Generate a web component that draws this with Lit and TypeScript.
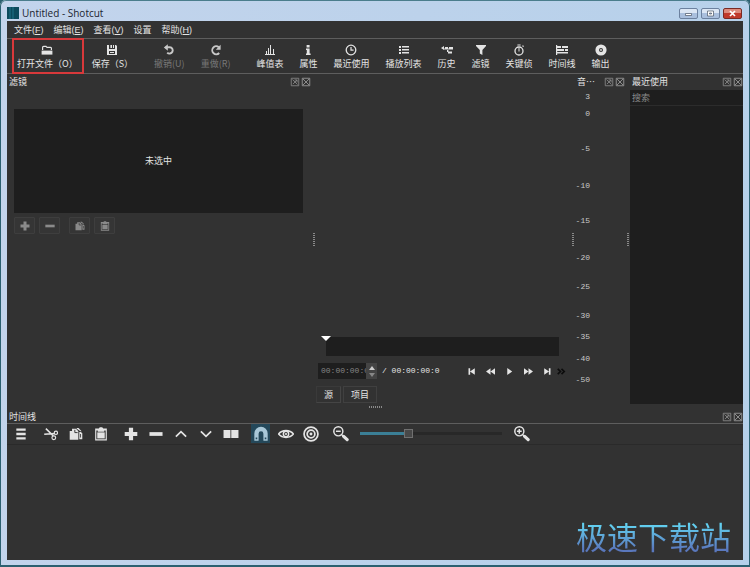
import { LitElement, html, css, svg, nothing } from "lit";
import { customElement, property } from "lit/decorators.js";
import { classMap } from "lit/directives/class-map.js";
import { styleMap } from "lit/directives/style-map.js";

const icons: Record<string, unknown> = {
  open: svg`<path d="M1.6 6V3.4a1 1 0 0 1 1-1H5l1 1h3.6a.8.8 0 0 1 .8.8V6" fill="none" stroke="currentColor" stroke-width="1.2"/><path d="M.6 6.6h10.8v4H.6z"/>`,
  save: svg`<path d="M1 1h2v4h6V1h1l1 1v9H1zM4.4 1H6v3H4.4zM3 7v3h6V7z" fill-rule="evenodd"/><path d="M4 8h4v1H4zM7 1h1v3H7z"/>`,
  undo: svg`<path d="M2.6 3.2h4.2a3.2 3.2 0 1 1-2.6 5.4" fill="none" stroke="currentColor" stroke-width="1.9"/><path d="M.8 3.6 4.8.2v6.6z"/>`,
  redo: svg`<path d="M8.8 3.2A4 4 0 1 0 9.2 9" fill="none" stroke="currentColor" stroke-width="1.9"/><path d="M10.6.8v5H5.8z"/>`,
  peak: svg`<path d="M1 10h10v1H1zM2 7h1v3H2zM4 4h1v6H4zM6 1h1v9H6zM9 5h1v5H9z"/>`,
  info: svg`<path d="M4.6 1h3v2.4h-3zM4 4.6h3.6V9.6h1V11H4V9.6h.8V6H4z"/>`,
  clock: svg`<circle cx="6" cy="6" r="4.8" fill="none" stroke="currentColor" stroke-width="1.3"/><path d="M6 3v3.2h2.6" fill="none" stroke="currentColor" stroke-width="1.2"/>`,
  list: svg`<path d="M1 2h2v2H1zM1 5h2v2H1zM1 8h2v2H1zM4 2h7v1.6H4zM4 5h7v1.6H4zM4 8h7v1.6H4z"/>`,
  history: svg`<path d="M0 4l3-2v4zM4 3h3v2H4zM8 3h4v2.6H8zM2 4.4h6v1H2zM6 6h1.4v2H6zM7 7.4h4v2H7z"/>`,
  filter: svg`<path d="M1 1h10v1L7.4 6v5L4.8 9.4V6L1 2z"/>`,
  stopwatch: svg`<circle cx="6" cy="7" r="4" fill="none" stroke="currentColor" stroke-width="1.3"/><path d="M4.4.4h3.2v1.2H4.4zM5.5 4h1v3.4h-1zM9 2l1-.8 1 1-.9.9z"/>`,
  timeline: svg`<path d="M0 1h1.2v10H0zM1 2h4v2H1zM6 2h6v2H6zM1 5h7v2H1zM9 5h3v2H9zM1 8h11v1.6H1z"/>`,
  disc: svg`<path d="M6 .4a5.6 5.6 0 1 0 0 11.2A5.6 5.6 0 0 0 6 .4zM6 4a2 2 0 1 1 0 4 2 2 0 0 1 0-4z" fill-rule="evenodd"/><circle cx="6" cy="6" r=".9"/>`,
  float: svg`<path d="M1.5 1.5h9v9h-9zM3 3l6 6M5.5 3.5H8.5V6.5M8.5 3.5 3.5 8.5" fill="none" stroke="currentColor" stroke-width="1"/>`,
  close: svg`<path d="M1.5 1.5h9v9h-9zM2 2l8 8M10 2l-8 8" fill="none" stroke="currentColor" stroke-width="1.2"/>`,
  add: svg`<path d="M4.2.6h3.6v3.6h3.6v3.6H7.8v3.6H4.2V7.8H.6V4.2h3.6z"/>`,
  remove: svg`<path d="M.4 4.4h11.2v3.2H.4z"/>`,
  copy: svg`<path d="M.6 3.4h2V1.6H6l2 2V11H.6z"/><path d="M5 2.4v2.4h2.4" fill="none" stroke="#323232" stroke-width=".8"/><path d="M6.6.8h1.6L10.8 3.6h-1L6.6 1.4zM8.8 4.2h1.4l1.2 1.2v5H8.8zM9.6 6v3h.7V6z" fill-rule="evenodd"/>`,
  paste: svg`<path d="M1 1.2h3L5 .2h2l1 1h3v10.4H1zM2 3v7.6h8V3H8.8v1H3.2V3z" fill-rule="evenodd"/><path d="M2.8 4.6h6.4v5.2H2.8z"/>`,
  menu: svg`<path d="M2 1.2h8v2H2zM2 5h8v2H2zM2 8.8h8v2H2z"/>`,
  cut: svg`<path d="M1.6 1.4 8 7.6M.2 6.2 9.4 5.6" fill="none" stroke="currentColor" stroke-width="1.3"/><circle cx="10.2" cy="5" r="1.4" fill="none" stroke="currentColor"/><circle cx="8.4" cy="9.2" r="1.6" fill="none" stroke="currentColor"/>`,
  up: svg`<path d="M1.6 8.2 6 4l4.4 4.2" fill="none" stroke="currentColor" stroke-width="1.5"/>`,
  down: svg`<path d="M1.6 3.8 6 8l4.4-4.2" fill="none" stroke="currentColor" stroke-width="1.5"/>`,
  split: svg`<path d="M.4 3h5.2v6H.4zM6.2 3h5.4v6H6.2z"/>`,
  magnet: svg`<path d="M1 11V5.6a5 5 0 0 1 10 0V11H7.8V5.8a1.8 1.8 0 0 0-3.6 0V11zM2 8.6v1.4h1.2V8.6zM8.8 8.6v1.4H10V8.6z" fill-rule="evenodd"/>`,
  eye: svg`<path d="M.4 6C3 2.6 9 2.6 11.6 6 9 9.4 3 9.4.4 6z" fill="none" stroke="currentColor" stroke-width="1.2"/><circle cx="6" cy="6" r="2" fill="none" stroke="currentColor" stroke-width="1.1"/><circle cx="6" cy="6" r=".8"/>`,
  target: svg`<g fill="none" stroke="currentColor" stroke-width="1.3"><circle cx="6" cy="6" r="5.2"/><circle cx="6" cy="6" r="2.9"/></g><circle cx="6" cy="6" r="1.1"/>`,
  zoomout: svg`<circle cx="4" cy="4" r="3.4" fill="none" stroke="currentColor" stroke-width="1.1"/><path d="M2.2 3.4h3.6v1.1H2.2z"/><path d="M6.4 6.4l1.4 1.4" stroke="currentColor"/><path d="M8 7.8l2.6 2.4" stroke="currentColor" stroke-width="2.4" stroke-linecap="round"/>`,
  zoomin: svg`<circle cx="4" cy="4" r="3.4" fill="none" stroke="currentColor" stroke-width="1.1"/><path d="M2.2 3.4h3.6v1.1H2.2zM3.4 2.2h1.1v3.6H3.4z"/><path d="M6.4 6.4l1.4 1.4" stroke="currentColor"/><path d="M8 7.8l2.6 2.4" stroke="currentColor" stroke-width="2.4" stroke-linecap="round"/>`,
  first: svg`<path d="M2 1.6h2.2v8.8H2zM10.4 1.6v8.8L4 6z"/>`,
  rewind: svg`<path d="M6 1.6v8.8L0 6zM12 1.6v8.8L6 6z"/>`,
  play: svg`<path d="M3 1.2 9.6 6 3 10.8z"/>`,
  forward: svg`<path d="M0 1.6 6 6l-6 4.4zM6 1.6 12 6l-6 4.4z"/>`,
  last: svg`<path d="M1.6 1.6 8 6l-6.4 4.4zM7.8 1.6H10v8.8H7.8z"/>`,
  more: svg`<path d="M1 2.6 4.6 6 1 9.4M6 2.6 9.6 6 6 9.4" fill="none" stroke="currentColor" stroke-width="2.2"/>`,
};

@customElement("app-icon")
class AppIcon extends LitElement {
  @property() name = "";
  static styles = css`
    :host { display: block; width: 12px; height: 12px; flex: none; }
    svg { display: block; width: 100%; height: 100%; fill: currentColor; }
  `;
  render() {
    return html`<svg viewBox="0 0 12 12" aria-hidden="true">${icons[this.name]}</svg>`;
  }
}

@customElement("dock-title")
class DockTitle extends LitElement {
  @property() label = "";
  static styles = css`
    :host { display: flex; align-items: center; height: 16px; flex: none; padding: 0 0 0 2px; gap: 1px; }
    h2 { flex: 1; min-width: 0; margin: 0; font: inherit; overflow: hidden; white-space: nowrap; }
    button { border: 0; padding: 0; background: none; color: #8c8c8c; width: 10px; height: 10px; }
    app-icon { width: 10px; height: 10px; }
  `;
  render() {
    return html`<h2>${this.label}</h2>
      <button aria-label="浮动"><app-icon name="float"></app-icon></button>
      <button aria-label="关闭"><app-icon name="close"></app-icon></button>`;
  }
}

type Tool = { icon: string; label: string; disabled?: boolean; marked?: boolean };

const menus = [["文件", "F"], ["编辑", "E"], ["查看", "V"], ["设置", ""], ["帮助", "H"]];

const toolGroups: Tool[][] = [
  [
    { icon: "open", label: "打开文件（O）", marked: true },
    { icon: "save", label: "保存（S）" },
  ],
  [
    { icon: "undo", label: "撤销(U)", disabled: true },
    { icon: "redo", label: "重做(R)", disabled: true },
  ],
  [
    { icon: "peak", label: "峰值表" },
    { icon: "info", label: "属性" },
    { icon: "clock", label: "最近使用" },
    { icon: "list", label: "播放列表" },
    { icon: "history", label: "历史" },
    { icon: "filter", label: "滤镜" },
    { icon: "stopwatch", label: "关键侦" },
    { icon: "timeline", label: "时间线" },
    { icon: "disc", label: "输出" },
  ],
];

/* level in dB and the share of the scale down to the next level */
const levels: [string, number][] = [
  ["3", 17], ["0", 35], ["-5", 37], ["-10", 35], ["-15", 37], ["-20", 29],
  ["-25", 29], ["-30", 21], ["-35", 22], ["-40", 21], ["-50", 30],
];

const filterButtons = [["add", "remove"], ["copy", "paste"]];
const transport = ["first", "rewind", "play", "forward", "last"];
const timelineGroups = [
  ["menu"],
  ["cut", "copy", "paste"],
  ["add", "remove", "up", "down", "split"],
  ["magnet", "eye", "target"],
  ["zoomout"],
];

@customElement("app-root")
class AppRoot extends LitElement {
  @property({ type: Number }) zoom = 33;

  static styles = css`
    :host {
      display: block;
      font: 9px/12px "Noto Sans CJK SC", "Liberation Sans", sans-serif;
      color: #e4e4e4;
    }
    * { box-sizing: border-box; }
    button, input { font: inherit; color: inherit; margin: 0; }
    button { border: 0; padding: 0; background: none; }

    .window {
      position: relative;
      display: flex;
      flex-direction: column;
      min-height: 100vh;
      padding: 0 6px 5px;
      border: 1px solid #2b6070;
      border-top-color: #4a7d8c;
      border-bottom-width: 2px;
      border-radius: 6px 6px 0 0;
      background: linear-gradient(100deg, #c3d4ec, #b5d0ea);
      box-shadow: 0 0 0 6px #2b6070;
    }
    .titlebar { display: flex; align-items: center; gap: 3px; height: 20px; padding: 4px 1px 0 0; color: #1c2430; flex: none; }
    .logo { width: 12px; height: 12px; flex: none; }
    .titlebar h1 { flex: 1; margin: 0; font: 10px/14px "Open Sans", sans-serif; }
    .caption { display: flex; gap: 3px; }
    .caption button {
      display: grid;
      place-items: center;
      width: 19px;
      height: 11px;
      border: 1px solid #6c819f;
      border-radius: 2px;
      background: linear-gradient(#dbe6f4 50%, #a9bfdd 50%);
    }
    .caption .quit { border-color: #7a2a24; background: linear-gradient(#dd8a7c 50%, #c0392b 50%); }
    .caption svg { width: 9px; height: 7px; display: block; }

    .client { flex: 1; display: flex; flex-direction: column; background: #323232; }
    .menubar { display: flex; height: 18px; padding-left: 2px; border-bottom: 1px solid #5e5e5e; flex: none; }
    .menubar button { padding: 0 5px; font-family: "Liberation Sans", "Noto Sans CJK SC", sans-serif; }
    .toolbar { display: flex; height: 35px; padding-left: 2px; border-bottom: 1px solid #5e5e5e; flex: none; }
    .group { display: flex; }
    .group + .group { margin-left: 5px; }
    .tool { position: relative; display: flex; flex-direction: column; align-items: center; gap: 2px; padding: 5px 8px 0; white-space: nowrap; }
    .tool:disabled { color: #777; }
    .tool:disabled app-icon { color: #c8c8c8; }
    .tool.marked { padding-right: 6px; }
    .toolbar .group:last-child { margin-left: 10px; }
    .marked::after { content: ""; position: absolute; inset: -1px 0 -1px 3px; border: 2px solid #d8393b; }

    .docks {
      flex: 330 1 0;
      display: grid;
      grid-template-columns: 304fr 5px 254fr 5px 50px 5px 113fr;
    }
    .dock { display: flex; flex-direction: column; min-width: 0; }
    .grip { display: grid; place-items: center; }
    .grip::before { content: ""; width: 2px; height: 13px; background: repeating-linear-gradient(#8a8a8a 0 1px, transparent 1px 2px); }
    .grip.flat { height: 6px; flex: none; }
    .grip.flat::before { width: 13px; height: 2px; background: repeating-linear-gradient(90deg, #8a8a8a 0 1px, transparent 1px 2px); }

    .empty { display: grid; place-items: center; height: 104px; margin: 19px 8px 4px 7px; background: #1e1e1e; }
    .filter-actions { display: flex; gap: 9px; padding-left: 7px; }
    .pair { display: flex; gap: 4px; }
    .filter-actions button { display: grid; place-items: center; width: 21px; height: 17px; border: 1px solid #3e3e3e; border-radius: 1px; background: #353535; color: #8a8a8a; }
    .filter-actions app-icon { width: 10px; height: 10px; }

    .player { justify-content: flex-end; padding-bottom: 1px; }
    .scrub { position: relative; height: 19px; margin: 0 11px 7px 10px; background: #1e1e1e; }
    .scrub::before { content: ""; position: absolute; left: -5px; top: -1px; border: 5px solid transparent; border-top-color: #fff; border-bottom: 0; }
    .controls { display: flex; align-items: center; height: 16px; margin: 0 4px 7px 2px; font: 8px/12px "Liberation Mono", monospace; }
    .spin { display: flex; width: 59px; height: 16px; flex: none; background: #1e1e1e; }
    .spin input { width: 48px; border: 0; padding: 0 0 0 3px; background: none; color: #858585; outline: 0; }
    .steps { flex: 1; display: flex; flex-direction: column; align-items: center; justify-content: center; gap: 3px; background: #444; }
    .steps button { width: 0; height: 0; border: 3px solid transparent; border-top: 0; border-bottom: 4px solid #ccc; }
    .steps .less { border-top: 4px solid #888; border-bottom: 0; }
    .total { margin-left: 5px; white-space: pre; }
    .transport { display: flex; margin-left: auto; }
    .transport button { display: grid; place-items: center; width: 19px; height: 16px; }
    .transport app-icon { width: 9px; height: 9px; }
    .more { color: #0c0c0c; }
    .more app-icon { width: 9px; height: 9px; }
    .tabs { display: flex; gap: 2px; }
    .tabs button { height: 17px; padding: 0 7px; border: 1px solid #404040; }
    .tabs .current { border-color: #3a3a3a #454545 #454545 #3a3a3a; padding: 1px 7px 0; }

    .scale { flex: 1; display: flex; flex-direction: column; margin: 0; padding: 1px 35px 0 0; list-style: none; font: 8px/12px "Liberation Mono", monospace; text-align: right; color: #c8c8c8; }
    .scale li { min-height: 12px; }

    .recent { flex: 1; display: flex; flex-direction: column; background: #1e1e1e; }
    .recent input { height: 16px; width: 100%; border: 0; border-bottom: 1px solid #2c2c2c; padding: 0 2px; background: #1e1e1e; outline: 0; }
    .recent input::placeholder { color: #8a8a8a; }

    .timeline { flex: 150 1 0; display: flex; flex-direction: column; }
    .timeline dock-title { height: 13px; }
    .edit { display: flex; height: 22px; padding-left: 1px; border-top: 1px solid #5e5e5e; border-bottom: 1px solid #2a2a2a; flex: none; }
    .edit button { display: grid; place-items: center; width: 25px; height: 19px; }
    .edit button app-icon { width: 14px; height: 14px; }
    .edit .on { color: #a9c8d8; background: #24485a content-box; padding: 0 3px; }
    .edit .wide app-icon { width: 16px; height: 16px; }
    .zoom { appearance: none; width: 142px; height: 19px; margin: 0 7px; background: none; }
    .zoom::-webkit-slider-runnable-track {
      height: 3px;
      background: linear-gradient(90deg, #3b7f96 var(--fill), #282828 var(--fill));
    }
    .zoom::-webkit-slider-thumb { appearance: none; width: 9px; height: 9px; margin-top: -3px; border: 1px solid #707070; background: #484848; }

    .brand {
      position: absolute;
      right: 18px;
      bottom: 7px;
      font: 31px/44px "Noto Sans CJK SC", sans-serif;
      background: linear-gradient(#62d0f0 25%, #5a78bd 80%);
      background-clip: text;
      color: transparent;
    }
  `;

  private tool(t: Tool) {
    return html`<button class=${classMap({ tool: true, marked: !!t.marked })} ?disabled=${t.disabled}>
      <app-icon name=${t.icon}></app-icon><span>${t.label}</span>
    </button>`;
  }

  render() {
    return html`<div class="window">
      <header class="titlebar">
        <svg class="logo" viewBox="0 0 12 12" aria-hidden="true">
          <path d="M0 0h12v12H0z" fill="#0c4a5c" /><path d="M3 0v12M6 0v12" stroke="#1f7288" />
        </svg>
        <h1>Untitled - Shotcut</h1>
        <div class="caption">
          <button aria-label="最小化"><svg viewBox="0 0 9 7"><path d="M1.5 3.5h6v2h-6z" fill="#fff" stroke="#4b5666" stroke-width=".7" /></svg></button>
          <button aria-label="最大化"><svg viewBox="0 0 9 7"><path d="M1.5 1h6v5h-6zM3.5 3v1h2V3z" fill="#fff" fill-rule="evenodd" stroke="#4b5666" stroke-width=".7" /></svg></button>
          <button class="quit" aria-label="关闭"><svg viewBox="0 0 9 7"><path d="M2 1l5 5M7 1 2 6" stroke="#fff" stroke-width="1.7" /></svg></button>
        </div>
      </header>
      <div class="client">
        <nav class="menubar">
          ${menus.map(([name, key]) => html`<button>${name}${key ? html`(<u>${key}</u>)` : nothing}</button>`)}
        </nav>
        <div class="toolbar">
          ${toolGroups.map((g) => html`<div class="group">${g.map((t) => this.tool(t))}</div>`)}
        </div>
        <main class="docks">
          <section class="dock">
            <dock-title label="滤镜"></dock-title>
            <div class="empty">未选中</div>
            <div class="filter-actions">
              ${filterButtons.map((p) => html`<div class="pair">
                ${p.map((n) => html`<button aria-label=${n}><app-icon name=${n}></app-icon></button>`)}
              </div>`)}
            </div>
          </section>
          <div class="grip"></div>
          <section class="dock player">
            <div class="scrub"></div>
            <div class="controls">
              <div class="spin">
                <input aria-label="时间" value="00:00:00:00" />
                <div class="steps">
                  <button aria-label="增加"></button><button class="less" aria-label="减少"></button>
                </div>
              </div>
              <span class="total">/ 00:00:00:0</span>
              <div class="transport">
                ${transport.map((n) => html`<button aria-label=${n}><app-icon name=${n}></app-icon></button>`)}
              </div>
              <button class="more" aria-label="更多"><app-icon name="more"></app-icon></button>
            </div>
            <div class="tabs"><button class="current">源</button><button>项目</button></div>
          </section>
          <div class="grip"></div>
          <section class="dock">
            <dock-title label="音⋯"></dock-title>
            <ul class="scale">
              ${levels.map(([db, share]) => html`<li style=${styleMap({ flex: `${share} 1 0` })}>${db}</li>`)}
            </ul>
          </section>
          <div class="grip"></div>
          <section class="dock">
            <dock-title label="最近使用"></dock-title>
            <div class="recent"><input type="search" aria-label="搜索" placeholder="搜索" /></div>
          </section>
        </main>
        <div class="grip flat"></div>
        <section class="timeline">
          <dock-title label="时间线"></dock-title>
          <div class="edit">
            ${timelineGroups.map((g) => html`<div class="group">
              ${g.map((n) => html`<button class=${classMap({ on: n === "magnet", wide: /eye|target|magnet|zoom|split/.test(n) })} aria-label=${n}>
                <app-icon name=${n}></app-icon>
              </button>`)}
            </div>`)}
            <input class="zoom" type="range" aria-label="缩放" min="0" max="100" .value=${String(this.zoom)}
              style=${styleMap({ "--fill": `${this.zoom}%` })}
              @input=${(e: Event) => { this.zoom = Number((e.target as HTMLInputElement).value); }} />
            <button class="wide" aria-label="zoomin"><app-icon name="zoomin"></app-icon></button>
          </div>
        </section>
      </div>
      <div class="brand">极速下载站</div>
    </div>`;
  }
}
